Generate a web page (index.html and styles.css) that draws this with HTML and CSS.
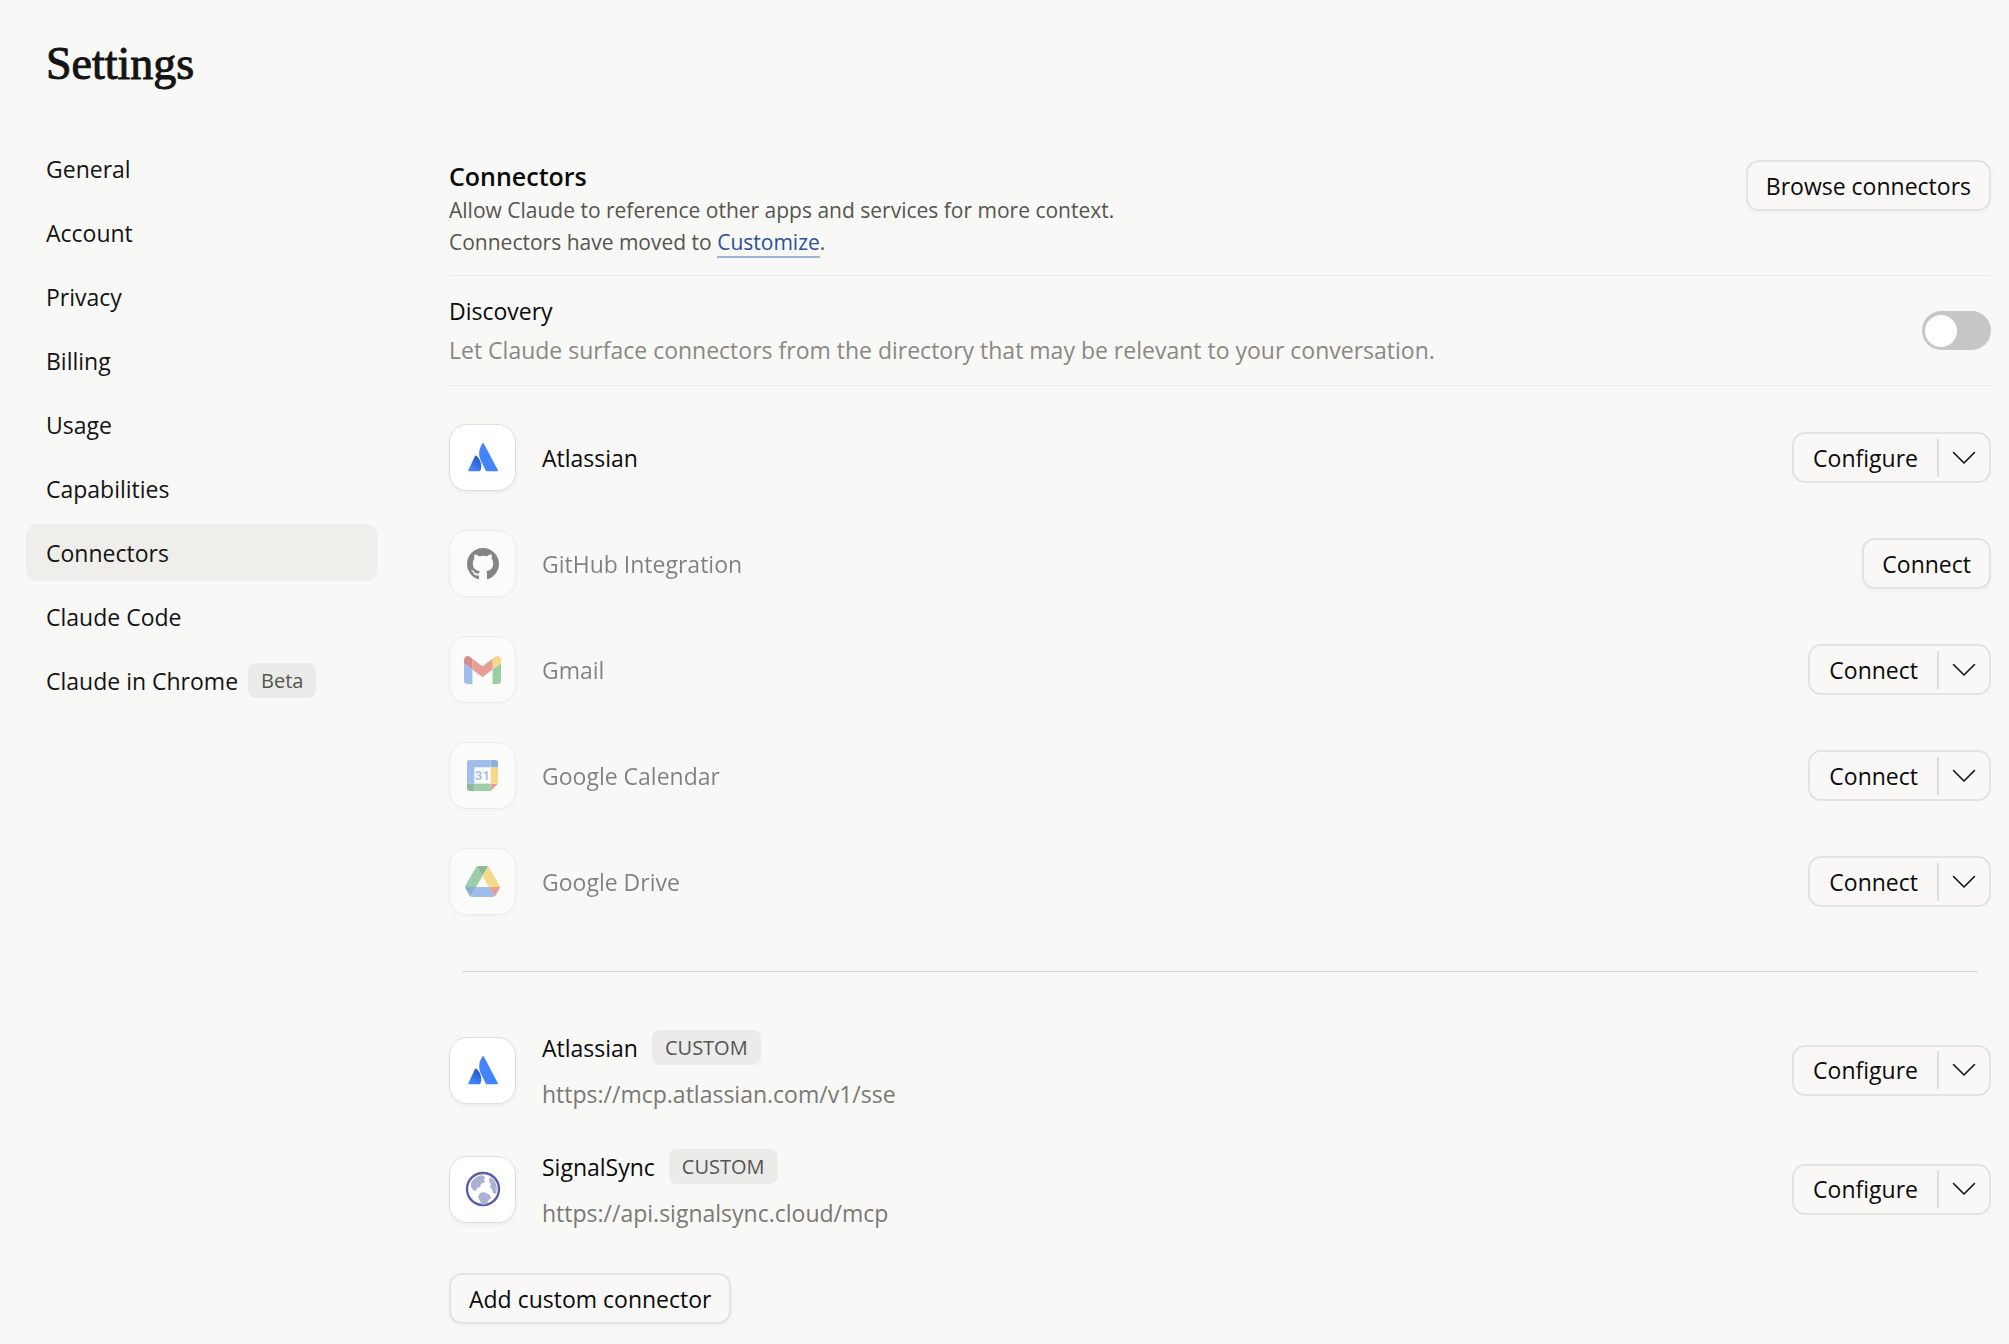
FILE: index.html
```html
<!DOCTYPE html>
<html lang="en">
<head>
<meta charset="utf-8">
<meta name="viewport" content="width=device-width, initial-scale=1">
<title>Settings</title>
<link rel="stylesheet" href="styles.css">
</head>
<body>
<svg class="sprite" aria-hidden="true">
  <defs>
    <linearGradient id="atl-shade" x1="14" y1="15" x2="6" y2="27" gradientUnits="userSpaceOnUse">
      <stop offset="0" stop-color="#1f52c4"/>
      <stop offset="1" stop-color="#4384fb"/>
    </linearGradient>
    <filter id="soft" x="-20%" y="-20%" width="140%" height="140%"><feGaussianBlur stdDeviation="0.7"/></filter>
  </defs>
  <symbol id="chevron" viewBox="0 0 24 14">
    <path d="M1.500 1.500 12 12 22.500 1.500" fill="none" stroke="#141413" stroke-width="1.600" stroke-linecap="round" stroke-linejoin="round"/>
  </symbol>
  <symbol id="atlassian" viewBox="0 0 30 29">
    <path d="M8.600 12.900C8.100 12.300 7.400 12.300 7 13L.3 27.200c-.3.6.1 1.100.7 1.100h10.400c.4 0 .7-.2.9-.5C14.400 23.200 13.100 16.800 8.600 12.900Z" fill="url(#atl-shade)"/>
    <path d="M14.200.7c-3.700 5.900-3.900 11.900-1.200 17.300l4.900 9.700c.2.4.6.6 1 .6h10.200c.6 0 1-.6.7-1.200L15.900.7c-.4-.8-1.200-.8-1.700 0Z" fill="#4384fb"/>
  </symbol>
</svg>

<header class="page-header">
  <h1 class="page-title">Settings</h1>
</header>

<div class="layout">
  <nav class="nav" aria-label="Settings">
    <a class="nav-item" href="#general">General</a>
    <a class="nav-item" href="#account">Account</a>
    <a class="nav-item" href="#privacy">Privacy</a>
    <a class="nav-item" href="#billing">Billing</a>
    <a class="nav-item" href="#usage">Usage</a>
    <a class="nav-item" href="#capabilities">Capabilities</a>
    <a class="nav-item active" href="#connectors" aria-current="page">Connectors</a>
    <a class="nav-item" href="#claude-code">Claude Code</a>
    <a class="nav-item" href="#chrome">Claude in Chrome <span class="badge">Beta</span></a>
  </nav>

  <main class="main">
    <section class="intro">
      <div class="intro-text">
        <h2 class="intro-title">Connectors</h2>
        <p class="intro-copy">Allow Claude to reference other apps and services for more context.<br>Connectors have moved to <a class="link" href="#customize">Customize</a>.</p>
      </div>
      <button class="button" type="button">Browse connectors</button>
    </section>

    <section class="discovery">
      <div class="discovery-text">
        <label class="name" for="discovery">Discovery</label>
        <p class="discovery-copy" id="discovery-copy">Let Claude surface connectors from the directory that may be relevant to your conversation.</p>
      </div>
      <input class="switch" type="checkbox" role="switch" id="discovery" aria-describedby="discovery-copy">
    </section>

    <ul class="list">
      <li class="row">
        <span class="tile"><svg width="30" height="29" aria-hidden="true"><use href="#atlassian"/></svg></span>
        <span class="name">Atlassian</span>
        <div class="split"><button class="split-main" type="button">Configure</button><button class="split-more" type="button" aria-label="More options for Atlassian"><svg width="24" height="14" aria-hidden="true"><use href="#chevron"/></svg></button></div>
      </li>
      <li class="row">
        <span class="tile dim">
          <svg width="32" height="32" viewBox="0 0 16 16" aria-hidden="true">
            <path fill="#141413" d="M8 0C3.580 0 0 3.580 0 8c0 3.540 2.290 6.530 5.470 7.590.4.070.55-.17.55-.38 0-.19-.01-.82-.01-1.490-2.010.37-2.530-.49-2.690-.94-.09-.23-.48-.94-.82-1.130-.28-.15-.68-.52-.01-.53.63-.01 1.080.58 1.230.82.72 1.210 1.870.87 2.330.66.07-.52.28-.87.51-1.070-1.780-.2-3.640-.89-3.640-3.950 0-.87.31-1.590.82-2.150-.08-.2-.36-1.020.08-2.120 0 0 .67-.21 2.200.82.64-.18 1.320-.27 2-.27s1.360.09 2 .27c1.530-1.040 2.200-.82 2.200-.82.44 1.100.16 1.920.08 2.120.51.56.82 1.270.82 2.150 0 3.070-1.870 3.750-3.650 3.950.29.25.54.73.54 1.480 0 1.070-.01 1.930-.01 2.200 0 .21.15.46.55.38A8.010 8.010 0 0 0 16 8c0-4.420-3.580-8-8-8Z"/>
          </svg>
        </span>
        <span class="name dim">GitHub Integration</span>
        <button class="button" type="button">Connect</button>
      </li>
      <li class="row">
        <span class="tile dim">
          <svg class="muted" width="37" height="28" viewBox="52 42 88 66" aria-hidden="true">
            <path fill="#4285f4" d="M58 108h14V74L52 59v43c0 3.320 2.690 6 6 6"/>
            <path fill="#34a853" d="M120 108h14c3.320 0 6-2.690 6-6V59l-20 15"/>
            <path fill="#fbbc04" d="M120 48v26l20-15v-8c0-7.420-8.470-11.650-14.400-7.200"/>
            <path fill="#ea4335" d="M72 74V48l24 18 24-18v26L96 92"/>
            <path fill="#c5221f" d="M52 51v8l20 15V48l-5.600-4.200c-5.940-4.450-14.400-.22-14.400 7.200"/>
          </svg>
        </span>
        <span class="name dim">Gmail</span>
        <div class="split"><button class="split-main" type="button">Connect</button><button class="split-more" type="button" aria-label="More options for Gmail"><svg width="24" height="14" aria-hidden="true"><use href="#chevron"/></svg></button></div>
      </li>
      <li class="row">
        <span class="tile dim">
          <svg class="muted" width="31" height="31" viewBox="0 0 200 200" aria-hidden="true">
            <path fill="#fff" d="M47.400 47.400h105.200v105.200H47.400z"/>
            <path fill="#ea4335" d="M152.600 200 200 152.600h-47.400z"/>
            <path fill="#fbbc04" d="M200 47.400h-47.400v105.200H200z"/>
            <path fill="#34a853" d="M152.600 152.600H47.400V200h105.200z"/>
            <path fill="#188038" d="M0 152.600v31.600A15.800 15.800 0 0 0 15.800 200h31.600v-47.400z"/>
            <path fill="#1967d2" d="M200 47.400V15.800A15.800 15.800 0 0 0 184.200 0h-31.600v47.400z"/>
            <path fill="#4285f4" d="M152.600 0H15.800A15.800 15.800 0 0 0 0 15.800v136.800h47.400V47.400h105.200z"/>
            <text x="100" y="131" text-anchor="middle" font-family="Roboto, sans-serif" font-size="84" font-weight="700" fill="#4285f4">31</text>
          </svg>
        </span>
        <span class="name dim">Google Calendar</span>
        <div class="split"><button class="split-main" type="button">Connect</button><button class="split-more" type="button" aria-label="More options for Google Calendar"><svg width="24" height="14" aria-hidden="true"><use href="#chevron"/></svg></button></div>
      </li>
      <li class="row">
        <span class="tile dim">
          <svg class="muted" width="35" height="31" viewBox="0 0 87.300 78" aria-hidden="true">
            <path d="m6.600 66.850 3.850 6.650c.8 1.400 1.950 2.500 3.300 3.300l13.750-23.800H0c0 1.550.4 3.100 1.200 4.500z" fill="#1967d2"/>
            <path d="M43.650 25 29.900 1.200c-1.350.8-2.500 1.900-3.300 3.300L1.200 48.500A9 9 0 0 0 0 53h27.500z" fill="#34a853"/>
            <path d="M73.550 76.800c1.350-.8 2.500-1.900 3.300-3.300l1.600-2.750 7.650-13.250c.8-1.400 1.200-2.950 1.200-4.500H59.800l5.850 11.500z" fill="#ea4335"/>
            <path d="M43.650 25 57.400 1.200C56.050.4 54.500 0 52.900 0H34.400c-1.600 0-3.150.45-4.500 1.200z" fill="#188038"/>
            <path d="M59.800 53H27.500L13.750 76.800c1.350.8 2.900 1.200 4.500 1.200h50.800c1.600 0 3.150-.45 4.500-1.200z" fill="#4285f4"/>
            <path d="m73.400 26.500-12.700-22c-.8-1.400-1.950-2.500-3.300-3.300L43.650 25 59.800 53h27.450c0-1.550-.4-3.100-1.200-4.500z" fill="#fbbc04"/>
          </svg>
        </span>
        <span class="name dim">Google Drive</span>
        <div class="split"><button class="split-main" type="button">Connect</button><button class="split-more" type="button" aria-label="More options for Google Drive"><svg width="24" height="14" aria-hidden="true"><use href="#chevron"/></svg></button></div>
      </li>
    </ul>

    <hr class="divider">

    <ul class="list custom">
      <li class="row">
        <span class="tile"><svg width="30" height="29" aria-hidden="true"><use href="#atlassian"/></svg></span>
        <div class="details">
          <div class="name-line"><span class="name">Atlassian</span><span class="badge strong">CUSTOM</span></div>
          <div class="url">https://mcp.atlassian.com/v1/sse</div>
        </div>
        <div class="split"><button class="split-main" type="button">Configure</button><button class="split-more" type="button" aria-label="More options for custom Atlassian"><svg width="24" height="14" aria-hidden="true"><use href="#chevron"/></svg></button></div>
      </li>
      <li class="row">
        <span class="tile">
          <svg width="38" height="38" viewBox="0 0 38 38" aria-hidden="true">
            <g filter="url(#soft)">
              <circle cx="19" cy="19" r="16" fill="#fff" stroke="#565ba8" stroke-width="2.400"/>
              <path fill="#aab2d3" d="M7 13c2-4 6-7 11-8l3 2-1 3 1 2-4 2-1 3-3 1-1 3-3-1-2-3Z"/>
              <path fill="#aab2d3" d="m26 7 5 4 2 7-1 6-3-1-1-4-2-2 1-3-2-3Z"/>
              <path fill="#aab2d3" d="m16 23 4-1 6 3 1 3-3 3-1 3-5 1-2-4-2-4Z"/>
            </g>
          </svg>
        </span>
        <div class="details">
          <div class="name-line"><span class="name">SignalSync</span><span class="badge strong">CUSTOM</span></div>
          <div class="url">https://api.signalsync.cloud/mcp</div>
        </div>
        <div class="split"><button class="split-main" type="button">Configure</button><button class="split-more" type="button" aria-label="More options for SignalSync"><svg width="24" height="14" aria-hidden="true"><use href="#chevron"/></svg></button></div>
      </li>
    </ul>

    <button class="button" type="button">Add custom connector</button>
  </main>
</div>
</body>
</html>
```
FILE: styles.css
```css
* {
  box-sizing: border-box;
}

body {
  margin: 0;
  padding: 36px 18px 18px 26px;
  background: #f8f8f6;
  color: #0b0b0b;
  font-family: "Open Sans", "Noto Sans", sans-serif;
  font-size: 23px;
  line-height: 32px;
}

h1,
h2,
p,
ul {
  margin: 0;
  padding: 0;
}

button {
  margin: 0;
  font: inherit;
  color: inherit;
  cursor: pointer;
}

svg {
  display: block;
}

.sprite {
  position: absolute;
  width: 0;
  height: 0;
}

.page-header {
  padding: 0 20px;
  margin-bottom: 48px;
}

.page-title {
  font-family: "Liberation Serif", serif;
  font-size: 46px;
  font-weight: 400;
  line-height: 56px;
  color: #141413;
  -webkit-text-stroke: 1px #141413;
}

.layout {
  display: grid;
  grid-template-columns: 352px minmax(0, 1fr);
  column-gap: 71px;
  align-items: start;
}

/* Sidebar */

.nav {
  display: flex;
  flex-direction: column;
  gap: 7px;
}

.nav-item {
  display: flex;
  align-items: center;
  gap: 10px;
  height: 57px;
  padding: 0 20px;
  border-radius: 12px;
  color: #141413;
  text-decoration: none;
}

.nav-item.active {
  background: #efeeeb;
}

.badge {
  height: 35px;
  padding: 0 13px;
  border-radius: 8px;
  background: #ebebe9;
  color: #555550;
  font-size: 20px;
  line-height: 35px;
}

.badge.strong {
  font-weight: 500;
}

/* Main column */

.main {
  padding-top: 20px;
}

.intro {
  display: flex;
  justify-content: space-between;
  align-items: flex-start;
  gap: 24px;
  padding-bottom: 17px;
  border-bottom: 1px solid #ebebe9;
}

.intro-title {
  margin-bottom: 2px;
  font-size: 25px;
  font-weight: 600;
  line-height: 32px;
}

.intro-copy {
  font-size: 21px;
  color: #555550;
}

.link {
  color: #2c5196;
  text-decoration: none;
  border-bottom: 2px solid #a0b3d3;
}

.discovery {
  display: flex;
  justify-content: space-between;
  align-items: center;
  gap: 24px;
  padding: 19px 0;
  border-bottom: 1px solid #ebebe9;
}

.discovery-text {
  display: flex;
  flex-direction: column;
  gap: 7px;
}

.discovery-copy {
  color: #8a8983;
}

.switch {
  appearance: none;
  display: flex;
  align-items: center;
  flex: none;
  width: 69px;
  height: 39px;
  margin: 0;
  padding: 0 3px;
  border-radius: 20px;
  background: #c6c6c4;
}

.switch::before {
  content: "";
  width: 32px;
  height: 32px;
  border-radius: 50%;
  background: #fff;
}

.switch:checked {
  justify-content: flex-end;
  background: #2c84db;
}

.list {
  display: flex;
  flex-direction: column;
  gap: 39px;
  padding-top: 38px;
  list-style: none;
}

.row {
  display: grid;
  grid-template-columns: 67px minmax(0, 1fr) auto;
  column-gap: 26px;
  align-items: center;
}

.tile {
  display: flex;
  align-items: center;
  justify-content: center;
  width: 67px;
  height: 67px;
  border: 1px solid #dededc;
  border-radius: 18px;
  background: #fff;
  box-shadow: 0 2px 4px rgba(0, 0, 0, 0.05);
}

.dim {
  opacity: 0.5;
}

.muted {
  filter: saturate(0.85);
}

.divider {
  height: 1px;
  margin: 56px 13px 58px;
  border: 0;
  background: #d6d6d4;
}

.list.custom {
  padding: 0 0 44px;
}

.details {
  display: flex;
  flex-direction: column;
  gap: 13px;
}

.name-line {
  display: flex;
  align-items: center;
  gap: 14px;
}

.url {
  color: #7b7974;
}

/* Buttons */

.button {
  flex: none;
  height: 51px;
  padding: 0 18px;
  border: 2px solid #e3e3e0;
  border-radius: 13px;
  background: #f9f8f6;
  font-weight: 500;
  box-shadow: 0 2px 4px rgba(0, 0, 0, 0.04);
}

.split {
  display: flex;
  align-items: center;
  height: 51px;
  border: 2px solid #e3e3e0;
  border-radius: 13px;
  background: #f9f8f6;
}

.split-main,
.split-more {
  display: flex;
  align-items: center;
  border: 0;
  background: none;
}

.split-main {
  padding: 0 19px;
  font-weight: 500;
}

.split-more {
  height: 38px;
  padding: 0 13px;
  border-left: 2px solid #dededc;
}
```
